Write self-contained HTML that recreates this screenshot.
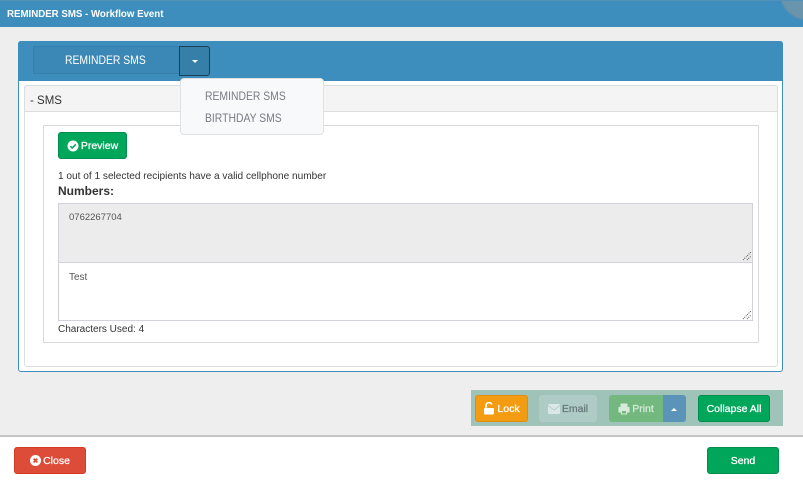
<!DOCTYPE html>
<html><head><meta charset="utf-8"><style>
*{box-sizing:border-box}
html,body{margin:0;padding:0}
body{width:803px;height:482px;overflow:hidden;position:relative;background:#eee;font-family:"Liberation Sans",sans-serif;color:#333}
.a{position:absolute}
.t{position:absolute;white-space:nowrap;line-height:14px}
.s{font-size:12px;transform:scaleX(.865);transform-origin:0 0}
.btn{position:absolute;border-radius:3px;color:#fff;font-size:10.5px;font-weight:normal;-webkit-text-stroke:.25px currentColor;display:flex;align-items:center;justify-content:center;white-space:nowrap}
.btn svg{margin-right:2px}
</style></head><body>
<div class="a" style="left:0;top:0;width:803px;height:27px;background:#3d8dbd;border-top:1px solid #5192b8;overflow:hidden">
<div class="a" style="left:781px;top:-32px;width:50px;height:50px;border-radius:50%;background:#6a93ac;box-shadow:0 0 3px #6a93ac"></div>
</div>
<div class="t" style="left:7px;top:8px;color:#fff;font-size:9.7px;font-weight:bold">REMINDER SMS - Workflow Event</div>

<div class="a" style="left:18px;top:41px;width:765px;height:331px;background:#fff;border:1px solid #3d8dbd;border-radius:3px"></div>
<div class="a" style="left:18px;top:41px;width:765px;height:40px;background:#3d8dbd;border-radius:3px 3px 0 0"></div>
<div class="a" style="left:33px;top:46px;width:147px;height:28px;background:#3b87b6;border:1px solid #3580ab"></div>
<div class="t s" style="left:65px;top:53px;color:#fff">REMINDER SMS</div>
<div class="a" style="left:179px;top:46px;width:31px;height:30px;background:#367fa9;border:1px solid #1d3f55;border-radius:0 3px 3px 0"></div>
<div class="a" style="left:192px;top:60px;width:0;height:0;border-left:3.5px solid transparent;border-right:3.5px solid transparent;border-top:3.5px solid #fff"></div>

<div class="a" style="left:24px;top:85px;width:754px;height:282px;background:#fff;border:1px solid #ddd;border-radius:3px"></div>
<div class="a" style="left:24px;top:85px;width:754px;height:27px;background:#f4f4f4;border:1px solid #ddd;border-radius:3px 3px 0 0"></div>
<div class="t" style="left:30px;top:94px;font-size:11.5px;color:#333">- SMS</div>

<div class="a" style="left:43px;top:125px;width:716px;height:218px;background:#fff;border:1px solid #d9d9d9"></div>

<div class="a" style="left:180px;top:78px;width:144px;height:57px;background:#f8f9fa;border:1px solid #dfe1e5;border-radius:4px;z-index:5"></div>
<div class="t s" style="left:205px;top:89px;color:#777b84;z-index:6">REMINDER SMS</div>
<div class="t s" style="left:205px;top:111px;color:#777b84;z-index:6">BIRTHDAY SMS</div>

<div class="btn" style="left:58px;top:132px;width:69px;height:27px;background:#00a65a;border:1px solid #008d4c">
<svg width="12" height="12" viewBox="0 0 12 12"><circle cx="6" cy="6" r="5.5" fill="#fff"/><path d="M3.3 6.1 5.2 8 8.8 4.3" fill="none" stroke="#00a65a" stroke-width="1.5"/></svg>Preview</div>

<div class="t" style="left:58px;top:170px;font-size:10.1px;color:#333">1 out of 1 selected recipients have a valid cellphone number</div>
<div class="t" style="left:58px;top:184px;font-size:12px;font-weight:bold;color:#333">Numbers:</div>

<div class="a" style="left:58px;top:203px;width:695px;height:60px;background:#ececec;border:1px solid #d2d2de"></div>
<div class="t" style="left:69px;top:211px;font-size:9.5px;color:#555">0762267704</div>
<svg class="a" style="left:742px;top:251px" width="10" height="10" viewBox="0 0 10 10"><path d="M1 9 9 1M5 9 9 5" stroke="#555" stroke-width="1" stroke-dasharray="1 1" fill="none"/></svg>

<div class="a" style="left:58px;top:262px;width:695px;height:59px;background:#fff;border:1px solid #d2d2de"></div>
<div class="t" style="left:69px;top:271px;font-size:10px;color:#555">Test</div>
<svg class="a" style="left:742px;top:310px" width="10" height="10" viewBox="0 0 10 10"><path d="M1 9 9 1M5 9 9 5" stroke="#555" stroke-width="1" stroke-dasharray="1 1" fill="none"/></svg>
<div class="t" style="left:58px;top:323px;font-size:10px;color:#333">Characters Used: 4</div>

<div class="a" style="left:471px;top:390px;width:312px;height:36px;background:#9fc2b9"></div>
<div class="btn" style="left:475px;top:395px;width:53px;height:27px;background:#f39c12;border:1px solid #e08e0b">
<svg width="12" height="13" viewBox="0 0 12 13"><path d="M3 6V3.5a3 3 0 0 1 5.8-1" fill="none" stroke="#fff" stroke-width="1.6"/><rect x="1" y="6" width="10" height="6.5" rx="1" fill="#fff"/></svg>Lock</div>
<div class="btn" style="left:539px;top:395px;width:58px;height:27px;background:#aecbc5;color:#66777a">
<svg width="12" height="10" viewBox="0 0 12 10"><rect width="12" height="10" rx="1" fill="#d9e8e6"/><path d="M0 1.5 6 6l6-4.5" fill="none" stroke="#aecbc5" stroke-width=".8"/></svg>Email</div>
<div class="btn" style="left:609px;top:395px;width:54px;height:27px;background:#73b97f;border-radius:3px 0 0 3px;color:#d6ebd8">
<svg width="12" height="12" viewBox="0 0 12 12"><path d="M3 4V1h6v3M3 9H1V4.5h10V9H9" fill="#d6ebd8" stroke="#d6ebd8"/><rect x="3.5" y="7.5" width="5" height="3.5" fill="#73b97f" stroke="#d6ebd8"/></svg>Print</div>
<div class="a" style="left:663px;top:395px;width:23px;height:27px;background:#5b94b8;border-radius:0 3px 3px 0"></div>
<div class="a" style="left:671px;top:408px;width:0;height:0;border-left:3.5px solid transparent;border-right:3.5px solid transparent;border-bottom:3.5px solid #fff"></div>
<div class="btn" style="left:698px;top:395px;width:72px;height:27px;background:#00a65a;border:1px solid #008d4c">Collapse All</div>

<div class="a" style="left:0;top:435px;width:803px;height:47px;background:#fff;border-top:2px solid #c4c4c4"></div>
<div class="btn" style="left:14px;top:447px;width:72px;height:27px;background:#dd4b39;border:1px solid #d73925">
<svg width="11" height="11" viewBox="0 0 11 11"><circle cx="5.5" cy="5.5" r="5.5" fill="#fff"/><path d="M3.6 3.6 7.4 7.4M7.4 3.6 3.6 7.4" stroke="#dd4b39" stroke-width="1.7"/></svg>Close</div>
<div class="btn" style="left:707px;top:447px;width:72px;height:27px;background:#00a65a;border:1px solid #008d4c">Send</div>
</body></html>
